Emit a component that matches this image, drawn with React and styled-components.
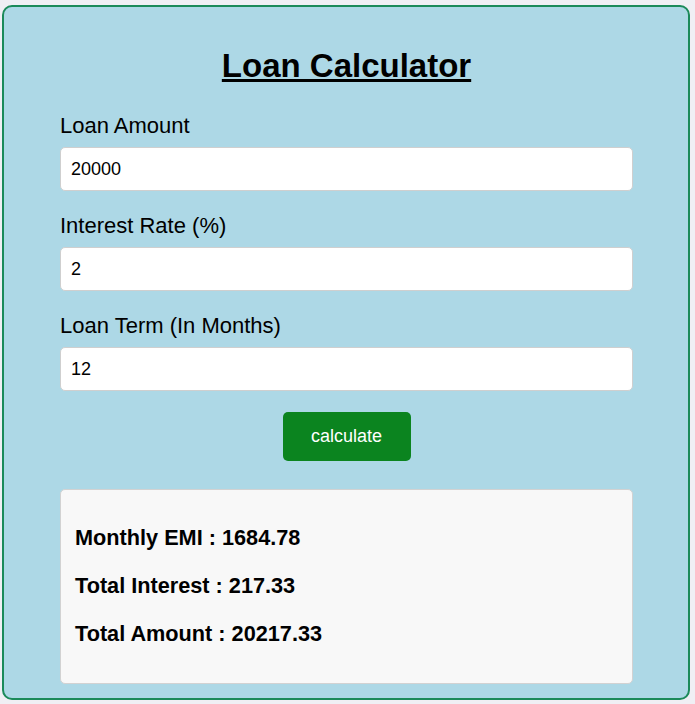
import React, { useState } from 'react'
import styled, { createGlobalStyle } from 'styled-components'

const GlobalStyle = createGlobalStyle`
body{
  margin:0;
  padding:5px 5px 0 2px;
  background:#f0eff4;
  font-family:"Liberation Sans", Arial, sans-serif;
}
*{box-sizing:border-box;}
`

const Card = styled.div`
width:688px;
height:695px;
background:#add8e6;
border:2px solid #1b8a5a;
border-radius:10px;
padding:40px 55px 0 56px;
display:flex;
flex-direction:column;
`

const Title = styled.h1`
margin:0 0 28px;
font-size:33px;
line-height:38px;
font-weight:bold;
text-align:center;
text-decoration:underline;
color:#000;
`

const Field = styled.div`
display:flex;
flex-direction:column;
margin-bottom:22px;
`

const Label = styled.label`
font-size:22px;
line-height:25px;
color:#000;
margin-bottom:9px;
`

const Input = styled.input`
height:44px;
width:100%;
border:1px solid #cfcfcf;
border-radius:5px;
background:#fff;
padding:0 10px;
font-family:inherit;
font-size:18px;
color:#000;
outline:none;
`

const ButtonRow = styled.div`
display:flex;
justify-content:center;
margin-top:-0.7px;
margin-bottom:28px;
`

const Button = styled.button`
width:128px;
height:49px;
border:none;
border-radius:5px;
background:#0b841f;
color:#fff;
font-family:inherit;
font-size:18px;
cursor:pointer;
`

const Result = styled.div`
height:195px;
background:#f8f8f8;
border:1px solid #d2d2d2;
border-radius:5px;
padding:35.5px 14px;
display:flex;
flex-direction:column;
gap:23.3px;
`

const ResultLine = styled.p`
margin:0;
font-size:21.7px;
line-height:24.7px;
font-weight:bold;
color:#000;
`

const calc = (amount, rate, months) => {
  const p = parseFloat(amount)
  const r = parseFloat(rate) / 12 / 100
  const n = parseFloat(months)
  const emi = (p * r * Math.pow(1 + r, n)) / (Math.pow(1 + r, n) - 1)
  const total = emi * n
  return {
    emi: emi.toFixed(2),
    interest: (total - p).toFixed(2),
    total: total.toFixed(2),
  }
}

const App = () => {
  const [amount, setAmount] = useState('20000')
  const [rate, setRate] = useState('2')
  const [months, setMonths] = useState('12')
  const [result, setResult] = useState(calc('20000', '2', '12'))

  return (
    <>
      <GlobalStyle />
      <Card>
        <Title>Loan Calculator</Title>
        <Field>
          <Label>Loan Amount</Label>
          <Input value={amount} onChange={e => setAmount(e.target.value)} />
        </Field>
        <Field>
          <Label>Interest Rate (%)</Label>
          <Input value={rate} onChange={e => setRate(e.target.value)} />
        </Field>
        <Field>
          <Label>Loan Term (In Months)</Label>
          <Input value={months} onChange={e => setMonths(e.target.value)} />
        </Field>
        <ButtonRow>
          <Button onClick={() => setResult(calc(amount, rate, months))}>calculate</Button>
        </ButtonRow>
        <Result>
          <ResultLine>Monthly EMI : {result.emi}</ResultLine>
          <ResultLine>Total Interest : {result.interest}</ResultLine>
          <ResultLine>Total Amount : {result.total}</ResultLine>
        </Result>
      </Card>
    </>
  )
}

export default App
